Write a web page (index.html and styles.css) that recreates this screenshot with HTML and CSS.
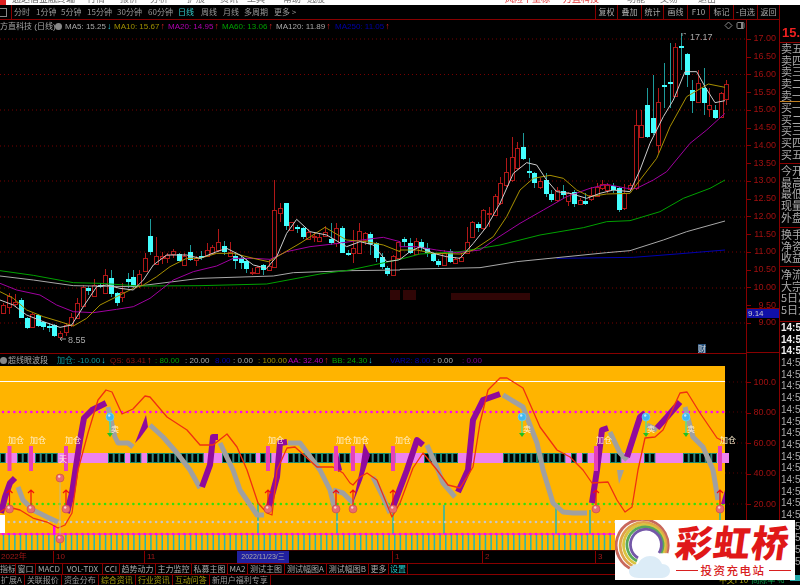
FILE: index.html
```html
<!DOCTYPE html>
<html lang="zh">
<head>
<meta charset="utf-8">
<title>方直科技</title>
<link rel="stylesheet" href="styles.css">
</head>
<body>
<div class="app">
  <header class="menu">
    <i class="logo"></i><span>通达信金融终端</span><span>行情</span><span>报价</span><span>分析</span><span>扩展</span><span>资讯</span><span>工具</span><span>帮助</span><span>选股</span>
    <span class="menu-red">风险不重标 · 万直科技</span><span>功能</span><span>交易</span><span>退出</span>
  </header>

  <nav class="toolbar">
    <div class="periods">
      <i class="square"></i>
      <span class="divider"></span>
      <span class="p w22">分时</span><span class="p w25">1分钟</span><span class="p w26">5分钟</span><span class="p w30">15分钟</span><span class="p w31">30分钟</span><span class="p w30">60分钟</span><span class="p w23 on">日线</span><span class="p w22">周线</span><span class="p w21">月线</span><span class="p w30">多周期</span><span class="p w22">更多 &gt;</span>
    </div>
    <div class="actions">
      <span class="b22">复权</span><span class="b24">叠加</span><span class="b22">统计</span><span class="b24">画线</span><span class="b22">F10</span><span class="b24">标记</span><span class="b24">-自选</span><span class="b22">返回</span>
    </div>
  </nav>

  <section class="main">
    <div class="legend">
      <span class="lg w-name gray">方直科技 (日线)</span><i class="dot"></i>
      <span class="lg w-ma5 gray">MA5: 15.25<b class="dn">↓</b></span>
      <span class="lg w-ma olive">MA10: 15.67<b class="up">↑</b></span>
      <span class="lg w-ma magenta">MA20: 14.95<b class="up">↑</b></span>
      <span class="lg w-ma green">MA60: 13.06<b class="up">↑</b></span>
      <span class="lg w-ma2 gray">MA120: 11.89<b class="up">↑</b></span>
      <span class="lg w-ma2 blue">MA250: 11.05<b class="up">↑</b></span>
      <span class="legend-tools"><svg width="9" height="9" viewBox="0 0 9 9"><path class="tool" d="M4.5 1 8 4.5 4.5 8 1 4.5z"/></svg><svg width="9" height="9" viewBox="0 0 9 9"><rect class="tool" x="1" y="1.5" width="7" height="6" rx="1"/><path class="tool-fill" d="M5 2h2v5H5z"/></svg></span>
    </div>
    <svg id="price" class="plot" width="746" height="320" viewBox="0 33 746 320"></svg>
  </section>
  <div class="axis axis-price">
    <span>17.00</span><span>16.50</span><span>16.00</span><span>15.50</span><span>15.00</span><span>14.50</span><span>14.00</span><span>13.50</span><span>13.00</span><span>12.50</span><span>12.00</span><span>11.50</span><span>11.00</span><span>10.50</span><span>10.00</span><span>9.50</span><span>9.00</span>
    <em class="cursor-price">9.14</em>
  </div>

  <aside class="side">
    <div class="s-price">15.49</div>
    <div class="s-group s-sell"><p>卖五</p><p>卖四</p><p>卖三</p><p>卖二</p><p>卖一</p></div>
    <div class="s-group s-buy"><p>买一</p><p>买二</p><p>买三</p><p>买四</p><p>买五</p></div>
    <div class="s-group s-open"><p>今开</p><p>最高</p><p>最低</p><p>现量</p><p>外盘</p></div>
    <div class="s-group s-turn"><p>换手</p><p>净资</p><p>收益</p></div>
    <div class="s-group s-flow"><p>净流入</p><p>大宗</p><p>5日净流</p><p>5日大单</p></div>
    <div class="s-times">
      <p class="t-hi">14:56</p><p class="t-hi">14:56</p><p class="t-hi">14:56</p><p>14:56</p><p>14:56</p><p>14:56</p><p>14:56</p><p>14:56</p><p>14:56</p><p>14:56</p><p>14:56</p><p>14:56</p><p>14:57</p><p>14:57</p><p>14:57</p><p>14:57</p><p>14:57</p><p>14:57</p><p>14:57</p><p>14:58</p><p>14:58</p>
    </div>
  </aside>

  <section class="indicator">
    <div class="legend legend2">
      <i class="dot dot2"></i>
      <span class="lg2 x49 gray">超线眼波段</span>
      <span class="lg2 x53 teal">加仓: -10.00<b class="dn">↓</b></span>
      <span class="lg2 x45 dred">QS: 63.41<b class="up">↑</b></span>
      <span class="lg2 x30 green">: 80.00</span>
      <span class="lg2 x30 gray">: 20.00</span>
      <span class="lg2 x18 blue">8.00</span>
      <span class="lg2 x25 gray">: 0.00</span>
      <span class="lg2 x30 olive">: 100.00</span>
      <span class="lg2 x44 magenta">AA: 32.40<b class="up">↑</b></span>
      <span class="lg2 x58 green">BB: 24.30<b class="dn">↓</b></span>
      <span class="lg2 x43 blue">VAR2: 8.00</span>
      <span class="lg2 x29 gray">: 0.00</span>
      <span class="lg2 x25 purple">: 0.00</span>
    </div>
    <svg id="osc" class="plot" width="746" height="184" viewBox="0 366 746 184"></svg>
  </section>
  <div class="axis axis-osc">
    <span>100.0</span><span>80.00</span><span>60.00</span><span>40.00</span><span>20.00</span>
  </div>

  <div class="dates">
    <span class="d d0">2022年</span><span class="d d10">10</span><span class="d d11">11</span><span class="d-cur">2022/11/23/三</span><span class="d d1">1</span><span class="d d2">2</span><span class="d d3">3</span>
  </div>
  <div class="dates-axis"></div>

  <div class="tabs">
    <span>指标</span><span>窗口</span><span>MACD</span><span>VOL-TDX</span><span>CCI</span><span>趋势动力</span><span>主力监控</span><span>私募主图</span><span>MA2</span><span>测试主图</span><span>测试幅图A</span><span>测试幅图B</span><span>更多</span><span class="tab-on">设置</span><span></span>
  </div>
  <div class="links">
    <span>扩展A</span><span>关联报价</span><span>资金分布</span><span class="link-y">综合资讯</span><span class="link-y">行业资讯</span><span class="link-y">互动问答</span><span>新用户福利专享</span>
    <span class="status"><b>中文F10</b><b class="st-g">间隙率 %</b><i></i></span>
  </div>
</div>

<div class="watermark">
  <svg class="rainbow" width="62" height="60" viewBox="0 0 62 60">
    <path class="r1" d="M19 50A26 26 0 1 1 52 33"/>
    <path class="r2" d="M20 47A23 23 0 1 1 50 33"/>
    <path class="r3" d="M21 44A20.500 20.500 0 1 1 48 33"/>
    <path class="r4" d="M22 41A18 18 0 1 1 46 33"/>
    <path class="r5" d="M23 38A15.500 15.500 0 1 1 44 33"/>
    <path class="cloud" d="M24 58c-7 0-10-3-10-7s4-7 9-7c2-5 7-8 12-8 6 0 10 3 12 8 5 0 8 3 8 7s-4 7-8 7z"/>
  </svg>
  <div class="brand">
    <div class="brand-name">彩虹桥</div>
    <div class="brand-sub"><i></i><span>投资充电站</span><i></i></div>
  </div>
</div>
<script src="app.js"></script>
</body>
</html>
```
FILE: styles.css
```css
* { box-sizing: border-box; }
html, body { margin: 0; padding: 0; background: #000; }
body { position: relative; width: 800px; height: 585px; overflow: hidden; font-family: "Liberation Sans", "Noto Sans CJK SC", sans-serif; }
p { margin: 0; }

.app {
  width: 800px; height: 585px; overflow: hidden; background: #000; color: #aaa;
  display: grid;
  grid-template-columns: 746px 34px 20px;
  grid-template-rows: 5px 15px 333px 197px 14px 11px 10px;
  filter: blur(0.45px);
}

/* top menu, clipped by the window edge */
.menu { grid-column: 1 / -1; background: #fff; overflow: hidden; display: grid; grid-template-columns: 12px 75px 33px 30px 37px 33px 27px 36px 24px 198px 122px 33px 38px 42px; font: 9px/10px "Noto Sans CJK SC", sans-serif; color: #777; white-space: nowrap; }
.menu span { margin-top: -6px; height: 11px; overflow: hidden; }
.logo { width: 6px; height: 5px; background: #d22; }
.menu span:first-of-type { color: #555; }
.menu .menu-red { color: #e03030; }

/* toolbar */
.toolbar { grid-column: 1 / -1; display: flex; justify-content: space-between; height: 15px; width: 780px; border-bottom: 1px solid #800; border-right: 1px solid #800; font: 8px/14px "Noto Sans CJK SC", sans-serif; color: #999; }
.periods { display: flex; align-items: center; }
.square { width: 7px; height: 9px; border: 1px solid #888; border-left: 0; margin-right: 4px; }
.divider { width: 1px; height: 14px; background: #800; margin-right: 2px; }
.p { display: block; flex: none; white-space: nowrap; }
.w21 { width: 21px; } .w22 { width: 22px; } .w23 { width: 23px; } .w25 { width: 25px; } .w26 { width: 26px; } .w30 { width: 30px; } .w31 { width: 31px; }
.on { color: #3cc; }
.actions { display: flex; }
.actions span { display: block; border-left: 1px solid #800; text-align: center; white-space: nowrap; color: #aaa; }
.b22 { width: 22px; } .b24 { width: 24px; }

/* plots */
.main { grid-column: 1; grid-row: 3; }
.indicator { grid-column: 1; grid-row: 4; border-top: 1px solid #800; }
.plot { display: block; }
.legend { display: flex; align-items: center; height: 13px; font: 8px/13px "Liberation Sans", "Noto Sans CJK SC", sans-serif; white-space: nowrap; position: relative; }
.legend b { font-weight: 700; font-size: 9px; margin-left: 1px; }
.lg { display: block; flex: none; }
.w-name { width: 55px; }
.w-ma5 { width: 49px; }
.w-ma { width: 54px; }
.w-ma2 { width: 59px; }
.dot { width: 7px; height: 7px; border-radius: 50%; background: #888; margin-right: 3px; flex: none; }
.dot2 { margin: 0 1px 0 0; }
.legend-tools { position: absolute; left: 724px; top: 1px; display: flex; gap: 3px; }
.tool { fill: none; stroke: #888; }
.tool-fill { fill: #888; }
.legend2 { height: 12px; }
.lg2 { display: block; flex: none; }
.x18 { width: 18px; } .x25 { width: 25px; } .x29 { width: 29px; } .x30 { width: 30px; } .x43 { width: 43px; } .x44 { width: 44px; } .x45 { width: 45px; } .x49 { width: 49px; } .x53 { width: 53px; } .x58 { width: 58px; }
.gray { color: #a8a8a8; } .olive { color: #a09000; } .magenta { color: #b000b0; } .green { color: #00a000; } .blue { color: #0000a8; } .teal { color: #109898; } .dred { color: #901010; } .purple { color: #800090; }
.up { color: #d02020; } .dn { color: #20c8d8; }

/* axes */
.axis { border-left: 1px solid #800; border-right: 1px solid #800; color: #a01010; font: 9px/1 "Liberation Sans", sans-serif; position: relative; display: flex; flex-direction: column; }
.axis span { display: flex; align-items: center; justify-content: flex-end; padding-right: 3px; flex: none; position: relative; }
.axis span::before { content: ""; position: absolute; left: 0; top: 50%; width: 4px; height: 1px; background: #800; }
.axis-price { grid-column: 2; grid-row: 3; padding-top: 10px; border-bottom: 1px solid #800; }
.axis-price span { height: 17.75px; }
.axis-osc { grid-column: 2; grid-row: 4; padding-top: 14px; }
.axis-osc span { height: 30.55px; }
.cursor-price { position: absolute; left: 0; top: 288px; width: 32px; height: 10px; background: #1010a8; border-top: 1px solid #800; color: #ccc; font: 8px/9px "Liberation Sans", sans-serif; padding-left: 1px; }

/* side panel */
.side { grid-column: 3; grid-row: 3 / -1; overflow: hidden; color: #aaa; font: 11px/11.700px "Noto Sans CJK SC", "Liberation Sans", sans-serif; white-space: nowrap; }
.s-price { height: 23px; font: 700 13px/25px "Liberation Sans", sans-serif; color: #f02020; padding-left: 2px; border-bottom: 1px solid #800; }
.s-group { border-bottom: 1px solid #800; padding-left: 1px; }
.s-group p { height: 11.7px; }
.s-sell { height: 59px; border-bottom-color: #c08020; }
.s-buy { height: 62px; }
.s-open { height: 64px; padding-top: 1px; }
.s-turn { height: 39px; padding-top: 1px; }
.s-flow { height: 55px; padding-top: 2px; }
.s-times { font-family: "Liberation Sans", sans-serif; padding-left: 1px; color: #aaa; }
.s-times p { height: 11.7px; font-size: 10px; }
.t-hi { color: #eee; font-weight: 700; }

/* dates */
.dates { grid-column: 1; grid-row: 5; position: relative; border-top: 1px solid #300; border-bottom: 1px solid #800; font: 8px/12px "Liberation Sans", "Noto Sans CJK SC", sans-serif; color: #a01818; }
.d { position: absolute; top: 0; padding-left: 2px; border-left: 1px solid #800; height: 12px; }
.d0 { left: -1px; border-left: 0; }
.d10 { left: 53px; } .d11 { left: 144px; } .d1 { left: 392px; } .d2 { left: 482px; } .d3 { left: 595px; }
.d-cur { position: absolute; left: 237px; top: 0; width: 52px; height: 12px; background: #2020a0; color: #aaa; font-size: 7px; white-space: nowrap; text-align: center; }
.dates-axis { grid-column: 2 / 3; grid-row: 5; border-left: 1px solid #800; border-right: 1px solid #800; border-bottom: 1px solid #800; }

/* tabs */
.tabs { grid-column: 1 / 3; grid-row: 6; display: grid; grid-template-columns: 16px 20px 27px 40px 17px 36px 36px 36px 20px 37px 42px 42px 20px 19px 1fr; border-bottom: 1px solid #800; font: 8px/10px "Noto Sans CJK SC", "Liberation Sans", sans-serif; color: #aaa; white-space: nowrap; }
.tabs span { border-right: 1px solid #800; text-align: center; overflow: hidden; }
.tabs .tab-on { color: #2cc; }
.links { grid-column: 1 / -1; grid-row: 7; display: flex; font: 8px/10px "Noto Sans CJK SC", "Liberation Sans", sans-serif; color: #999; white-space: nowrap; }
.links span { display: block; padding: 0 2px 0 1px; border-right: 1px solid #800; }
.links span:nth-of-type(n+2) { padding: 0 2px 0 2px; }
.links .link-y { color: #a8a010; }
.links .status { margin-left: 446px; border: 0; display: flex; gap: 3px; padding: 4px 0 0; }
.status b { font-weight: 400; color: #a8a010; }
.status .st-g { color: #10a050; }
.status i { width: 10px; height: 6px; background: #2aa; margin-left: 3px; }

/* svg parts */
.grid-line { stroke: #700; stroke-width: 1; stroke-dasharray: 1 3; }
.c-up { fill: #000; stroke: #b01818; stroke-width: 1; }
.c-up-w { stroke: #b01818; stroke-width: 1; }
.c-dn { fill: #4ff; }
.c-dn-w { stroke: #1e9a9a; stroke-width: 1; }
.ma { fill: none; stroke-width: 1; stroke-linejoin: round; }
.m5 { stroke: #ccc; } .m10 { stroke: #a89000; } .m20 { stroke: #a000a0; } .m60 { stroke: #00a000; } .m120 { stroke: #a8a8a8; } .m250 { stroke: #0000b0; }
.peak { fill: #aaa; font: 9px "Liberation Sans", sans-serif; }
.peak-l { fill: none; stroke: #999; }
.smear { fill: #300606; }
.fin-bg { fill: #26507a; }
.fin { fill: #ddd; font: 8px "Noto Sans CJK SC", sans-serif; }
.o-bg { fill: #ffb400; }
.o-white { stroke: #fff; stroke-width: 1; }
.o-dots { stroke-width: 2.600; stroke-linecap: round; stroke-dasharray: 0 5.67; }
.od-m { stroke: #f0f; } .od-g { stroke: #30e010; } .od-s { stroke: #c8c8c8; }
.o-m-line { stroke: #f0f; stroke-width: 1; }
.o-tick { stroke: #20b8b0; stroke-width: 1.500; }
.o-band-p { fill: none; stroke: #900a9c; stroke-width: 6; stroke-linejoin: round; }
.o-band-g { fill: none; stroke: #a0a0a0; stroke-width: 5; stroke-linejoin: round; }
.o-tri-p { fill: #900a9c; }
.o-tri-g { fill: #a0a0a0; }
.o-red { fill: none; stroke: #f03010; stroke-width: 1.300; stroke-linejoin: round; }
.band-bg { fill: #ee82ee; }
.band-cell { fill: #000; stroke: #148a70; stroke-width: 1; }
.band-tall { fill: #e840b8; }
.o-label { fill: #fff0d0; font: 8px "Noto Sans CJK SC", sans-serif; }
.ball { fill: #e86a70; stroke: #c04040; stroke-width: .5; }
.ball-hi { fill: #fff; opacity: .7; }
.ball-b { fill: #40b8f0; stroke: #70e0ff; stroke-width: .5; }
.arrow-r { stroke: #f01010; stroke-width: 1.200; fill: none; }
.arrow-g { stroke: #30e8b0; stroke-width: 1.200; fill: none; }
.arrow-gh { fill: #20c020; }
.o-gline { stroke: #c0b890; stroke-width: 1; }
.o-white-block { fill: #fff; }
.o-mag-block { fill: #f0f; }
.o-end { stroke: #500; stroke-dasharray: 1 3; }

/* watermark */
.watermark { position: absolute; left: 615px; top: 520px; width: 180px; height: 60px; background: #fff; display: flex; overflow: hidden; }
.rainbow { flex: none; }
.rainbow path { fill: none; stroke-width: 2.800; }
.rainbow .r1 { stroke: #c8685c; } .rainbow .r2 { stroke: #e0a24a; } .rainbow .r3 { stroke: #d8c440; } .rainbow .r4 { stroke: #5aa858; } .rainbow .r5 { stroke: #7458a8; }
.rainbow .cloud { fill: #dcecf7; stroke: none; }
.brand { flex: 1; display: flex; flex-direction: column; align-items: center; }
.brand-name { font: 900 37px/42px "Noto Sans CJK SC", sans-serif; color: #e01818; letter-spacing: 1px; transform: skewX(-8deg); margin-left: -6px; }
.brand-sub { display: flex; align-items: center; gap: 3px; font: 500 11.500px/16px "Noto Sans CJK SC", sans-serif; color: #d82020; letter-spacing: 1.500px; margin-left: -6px; }
.brand-sub i { width: 22px; height: 1px; background: #d82020; }
```
FILE: app.js
```js
const NS = 'http://www.w3.org/2000/svg';
function el(parent, name, attrs, text) {
  const n = document.createElementNS(NS, name);
  for (const k in attrs) n.setAttribute(k, attrs[k]);
  if (text) n.textContent = text;
  parent.appendChild(n);
  return n;
}
const pts = a => a.map(p => p.join(',')).join(' ');

/* ---------- price chart ---------- */
const price = document.getElementById('price');
[39, 74.5, 110, 146, 181, 217, 252, 288, 323].forEach(y =>
  el(price, 'line', { x1: 0, x2: 746, y1: y, y2: y, class: 'grid-line' }));
[[390, 290, 10, 10], [403, 290, 13, 10], [451, 293, 79, 7]].forEach(r =>
  el(price, 'rect', { x: r[0], y: r[1], width: r[2], height: r[3], class: 'smear' }));

/* candles in 3x crop units: x, up?, body top, body bottom, wick top, wick bottom */
const left = [[10,1,345,368,340,370],[27,1,318,350,310,372],[44,1,335,342,312,350],[62,0,330,383,325,385],[80,0,385,414,380,416],[96,1,372,412,370,414],[113,0,375,408,372,410],[130,0,396,412,392,420],[147,0,408,412,400,425],[163,0,405,437,402,440],[180,1,428,440,424,446],[198,1,405,425,400,438],[214,1,380,405,370,410],[232,1,340,383,325,385],[248,1,292,348,285,350],[265,0,295,303,288,315],[282,1,285,318,268,320],[300,0,285,290,278,295],[316,1,256,310,236,312],[333,0,264,312,240,320],[350,0,310,340,305,348],[367,1,305,322,280,335],[384,0,268,276,250,295],[400,0,262,290,240,295],[418,1,252,285,240,295],[435,1,205,243,190,247],[451,0,138,185,87,195],[468,1,198,222,140,224],[485,1,198,205,185,222],[502,1,196,205,188,218],[518,1,182,192,178,205],[536,0,193,212,190,214],[553,1,198,225,190,226],[570,0,185,210,165,212],[587,1,205,210,198,228],[604,0,198,205,182,210],[620,1,180,198,158,202],[637,1,170,190,165,195],[655,1,155,180,118,185],[672,0,168,186,152,195],[689,1,185,198,155,200],[706,0,198,214,185,238],[722,0,203,218,195,236],[739,0,212,238,208,248],[755,1,245,250,235,255],[772,1,232,248,228,252],[790,0,226,240,222,256],[806,1,228,240,210,242],[823,1,60,230,-30,232],[840,1,55,68,38,95],[857,0,40,108,40,120],[874,1,97,120,95,122],[891,0,110,118,104,130],[908,0,115,142,110,148],[925,1,125,148,118,150],[942,1,138,142,125,155],[958,1,140,152,130,155],[975,1,125,138,108,140],[992,0,148,160,100,165],[1009,1,115,160,100,170],[1026,0,115,188,108,190],[1043,0,188,195,180,198],[1060,1,175,188,120,220],[1076,1,122,188,98,190],[1094,1,130,150,125,165],[1110,0,132,162,125,195],[1128,0,160,205,155,215],[1145,0,200,232,190,238],[1162,0,233,252,228,258],[1180,1,198,256,195,258],[1195,1,155,205,155,205]];
const right = [[13,0,627,637,620,650],[30,0,640,668,625,672],[47,1,632,672,625,675],[64,0,635,655,628,662],[81,0,653,670,640,682],[98,0,672,692,665,695],[115,0,692,704,688,710],[132,1,670,705,660,708],[149,0,662,696,658,700],[166,1,688,698,680,700],[183,1,680,692,672,695],[200,1,635,670,592,672],[217,1,575,620,572,622],[233,0,582,595,575,605],[250,1,540,595,537,600],[267,1,548,552,530,590],[284,1,498,555,492,558],[301,1,460,520,440,525],[318,1,425,465,385,470],[335,1,382,450,320,455],[352,1,355,415,335,420],[369,0,352,388,310,390],[386,0,423,430,385,445],[403,0,428,460,425,475],[420,1,452,470,445,478],[437,0,450,493,430,500],[454,0,493,510,480,515],[471,1,480,510,470,515],[488,0,482,495,465,505],[505,1,488,512,485,528],[522,0,485,522,480,530],[539,1,510,522,505,525],[556,0,514,522,490,525],[573,1,495,508,470,512],[590,1,470,497,460,500],[605,1,462,475,450,480],[622,1,465,480,458,490],[639,0,468,480,460,490],[656,0,475,540,470,545],[673,1,490,535,462,540],[690,1,465,478,458,482],[707,1,285,475,240,480],[724,1,285,320,240,325],[741,0,225,320,175,325],[758,0,265,310,135,315],[775,1,215,345,175,370],[792,0,166,172,100,235],[809,0,155,163,40,235],[826,1,52,198,40,200],[843,0,48,55,5,120],[860,0,72,135,70,170],[877,0,180,212,150,250],[894,1,160,215,120,220],[911,0,175,220,115,255],[928,1,225,238,175,260],[945,0,240,265,225,268],[962,1,190,262,185,265],[978,1,162,208,150,225]];

function candle(c, ox, oy) {
  const x = Math.round(ox + c[0] / 3) + 0.5, y = v => Math.round(oy + v / 3);
  const top = y(c[2]), bot = y(c[3]);
  el(price, 'line', { x1: x, x2: x, y1: y(c[4]), y2: y(c[5]), class: c[1] ? 'c-up-w' : 'c-dn-w' });
  if (c[1]) el(price, 'rect', { x: x - 2, y: top + 0.5, width: 4, height: Math.max(bot - top, 1), class: 'c-up' });
  else el(price, 'rect', { x: x - 2.5, y: top, width: 5, height: Math.max(bot - top, 2), class: 'c-dn' });
}
left.forEach(c => candle(c, 0, 190));
right.forEach(c => candle(c, 400, 30));

const L = a => a.map(p => [p[0] / 3, 190 + p[1] / 3]);
const R = a => a.map(p => [400 + p[0] / 3, 30 + p[1] / 3]);
const mas = {
  m250: R([[470,685],[700,682],[830,672],[975,660]]),
  m120: [...L([[0,258],[100,270],[220,287],[400,290],[600,265],[820,258],[880,248],[1050,242],[1200,240]]), ...R([[0,718],[240,713],[350,695],[480,682],[620,668],[690,662],[790,630],[860,605],[975,573]])],
  m60: [...L([[0,242],[100,256],[220,278],[300,280],[420,288],[600,287],[800,282],[960,252],[1050,240],[1120,225],[1200,208]]), ...R([[0,688],[60,672],[180,665],[300,645],[420,615],[550,593],[620,575],[690,572],[780,545],[850,505],[930,475],[975,450]])],
  m20: [...L([[0,280],[50,300],[120,315],[170,345],[220,365],[280,368],[350,358],[400,350],[450,325],[520,270],[580,245],[650,228],[700,205],[760,205],[810,208],[860,185],[930,170],[1000,162],[1100,148],[1150,142],[1200,155]]), ...R([[0,650],[50,650],[110,660],[170,668],[240,660],[290,625],[360,580],[430,540],[500,500],[570,475],[620,463],[680,475],[710,475],[760,450],[800,425],[870,340],[920,300],[975,250]])],
  m10: [...L([[0,305],[40,325],[80,360],[130,380],[180,395],[220,408],[260,385],[300,345],[350,320],[400,295],[430,285],[470,260],[510,230],[560,205],[600,205],[650,190],[700,190],[760,205],[805,215],[840,195],[900,160],[975,112],[1040,150],[1100,155],[1150,165],[1200,185]]), ...R([[0,660],[50,660],[100,670],[180,672],[220,660],[280,620],[320,560],[360,480],[400,445],[450,436],[490,445],[530,480],[570,500],[620,492],[690,490],[720,450],[770,385],[810,290],[860,200],[925,162],[975,172]])],
  m5: [...L([[0,330],[40,345],[80,375],[130,395],[180,412],[215,405],[250,350],[290,290],[320,285],[360,295],[400,300],[430,270],[460,225],[500,195],[560,195],[600,205],[650,185],[680,175],[720,195],[760,225],[800,235],[830,200],[860,130],[890,88],[930,125],[980,135],[1040,170],[1080,155],[1120,165],[1160,215],[1195,210]]), ...R([[0,688],[30,665],[60,650],[100,670],[140,680],[180,685],[220,640],[260,590],[300,520],[340,430],[380,398],[410,405],[440,450],[470,485],[510,490],[560,505],[600,490],[640,480],[690,485],[720,420],[750,340],[790,260],[820,210],[855,125],[890,125],[915,170],[945,218],[975,212]])]
};
for (const k in mas) el(price, 'polyline', { points: pts(mas[k]), class: 'ma ' + k });

el(price, 'path', { d: 'M682 36v-4l4 2', class: 'peak-l' });
el(price, 'text', { x: 690, y: 40, class: 'peak' }, '17.17');
el(price, 'path', { d: 'M60 339h6M60 339l2-2M60 339l2 2', class: 'peak-l' });
el(price, 'text', { x: 68, y: 343, class: 'peak' }, '8.55');
el(price, 'rect', { x: 698, y: 344, width: 8, height: 9, class: 'fin-bg' });
el(price, 'text', { x: 698, y: 352, class: 'fin' }, '财');

/* ---------- oscillator ---------- */
const osc = document.getElementById('osc');
el(osc, 'rect', { x: 0, y: 366, width: 725, height: 184, class: 'o-bg' });
[382, 412, 443, 473, 504].forEach(y => el(osc, 'line', { x1: 725, x2: 746, y1: y, y2: y, class: 'o-end' }));
el(osc, 'line', { x1: 0, x2: 725, y1: 381.5, y2: 381.5, class: 'o-white' });

const step = 5.67;
for (let i = 0; i < 127; i++) {
  const x = 3.5 + i * step;
  el(osc, 'line', { x1: x, x2: x, y1: 534, y2: 550, class: 'o-tick' });
}
[[258, 505], [337, 510], [393, 510], [444, 505], [556, 505], [590, 510], [720, 512]].forEach(t =>
  el(osc, 'line', { x1: t[0], x2: t[0], y1: t[1], y2: 534, class: 'o-tick' }));
el(osc, 'line', { x1: 0, x2: 725, y1: 534, y2: 534, class: 'o-m-line' });
[[534, 'od-m'], [522, 'od-s'], [504, 'od-g'], [412, 'od-m']].forEach(d =>
  el(osc, 'line', { x1: 3, x2: 727, y1: d[0], y2: d[0], class: 'o-dots ' + d[1] }));
el(osc, 'rect', { x: 0, y: 515, width: 5, height: 18, class: 'o-white-block' });
el(osc, 'rect', { x: 53, y: 525, width: 2.5, height: 9, class: 'o-mag-block' });

/* pink / black band */
el(osc, 'rect', { x: 0, y: 453, width: 729, height: 10, class: 'band-bg' });
[[0,2],[17,29],[35,57],[108,125],[130,137],[147,204],[222,254],[260,267],[288,333],[339,351],[367,391],[424,458],[503,565],[571,577],[582,588],[610,622],[644,656],[683,718]].forEach(r => {
  for (let x = r[0]; x < r[1] - 1; x += step)
    el(osc, 'rect', { x: x + 0.5, y: 453.5, width: step - 1, height: 9, class: 'band-cell' });
});

const pr = [
  [[1,513],[5,497],[10,483],[15,478]],
  [[67,513],[72,493],[80,440],[84,418],[92,410],[106,403]],
  [[202,487],[210,465],[213,437],[218,437]],
  [[268,510],[277,477],[280,443],[287,442]],
  [[393,507],[407,470],[417,440],[423,445]],
  [[458,492],[468,470],[473,420],[483,400],[500,394]],
  [[592,503],[597,470],[602,430],[608,428]],
  [[627,457],[640,417],[645,413]],
  [[657,428],[667,417],[680,402]]
];
const gr = [
  [[18,487],[23,500],[33,510],[47,517],[58,522]],
  [[108,407],[115,437],[118,443],[128,443],[133,447]],
  [[150,425],[163,437],[177,453],[190,470],[200,488]],
  [[220,443],[233,470],[240,490],[257,515],[264,515]],
  [[288,443],[300,443],[320,470],[330,490],[335,510]],
  [[333,490],[343,493],[353,503]],
  [[373,477],[383,497],[390,513]],
  [[427,445],[438,470],[443,483],[455,497]],
  [[503,395],[523,407],[537,443],[543,470],[553,503],[563,512],[573,513],[587,513]],
  [[610,432],[620,453],[627,460]],
  [[647,425],[657,430]],
  [[685,407],[693,437],[703,447],[713,470],[718,500]]
];
gr.forEach(p => el(osc, 'polyline', { points: pts(p), class: 'o-band-g' }));
pr.forEach(p => el(osc, 'polyline', { points: pts(p), class: 'o-band-p' }));
el(osc, 'polygon', { points: '135,443 146,415 148,427 140,438', class: 'o-tri-p' });
el(osc, 'polygon', { points: '336,445 338,472 342,470', class: 'o-tri-p' });
el(osc, 'polygon', { points: '353,503 360,470 364,443 370,455 362,480', class: 'o-tri-p' });
el(osc, 'polygon', { points: '721,504 725,490 725,504', class: 'o-tri-p' });
el(osc, 'polygon', { points: '617,470 619,484 624,470', class: 'o-tri-g' });

el(osc, 'polyline', { class: 'o-red', points: pts([[0,512],[8,507],[20,510],[33,518],[47,522],[58,528],[65,525],[72,513],[78,470],[88,433],[98,400],[106,390],[112,392],[122,414],[133,409],[145,396],[150,397],[167,417],[187,430],[200,445],[213,445],[227,434],[237,447],[247,470],[258,503],[267,513],[272,515],[277,470],[287,448],[295,447],[317,467],[333,467],[343,473],[350,483],[353,485],[360,477],[367,473],[377,480],[392,517],[400,503],[413,468],[423,453],[437,470],[448,485],[460,488],[467,477],[473,467],[480,423],[488,390],[500,378],[507,378],[523,388],[540,427],[557,450],[570,457],[583,470],[592,483],[608,482],[617,500],[625,512],[632,507],[638,470],[645,438],[655,437],[663,430],[680,393],[687,392],[700,413],[717,438],[725,442]]) });

[9.5, 31, 66, 268, 336, 353, 393, 596, 720].forEach(x => {
  el(osc, 'rect', { x: x - 2, y: 446, width: 4, height: 25, class: 'band-tall' });
});
[[16,'加仓'],[38,'加仓'],[73,'加仓'],[276,'加仓'],[344,'加仓'],[361,'加仓'],[403,'加仓'],[604,'加仓'],[728,'加仓']].forEach(l =>
  el(osc, 'text', { x: l[0] - 8, y: 443, class: 'o-label' }, l[1]));
el(osc, 'text', { x: 59, y: 462, class: 'o-label' }, '天');

function ball(x, y, cls) {
  el(osc, 'circle', { cx: x, cy: y, r: 4, class: cls });
  el(osc, 'circle', { cx: x - 0.8, cy: y - 1.5, r: 1.2, class: 'ball-hi' });
}
el(osc, 'line', { x1: 60, x2: 60, y1: 478, y2: 539, class: 'o-gline' });
[9.5, 31, 66, 268, 336, 353, 393, 596, 720].forEach(x => {
  el(osc, 'path', { d: `M${x} 505V490M${x - 3} 493l3-3 3 3`, class: 'arrow-r' });
  ball(x, 509, 'ball');
});
ball(60, 478, 'ball');
ball(60, 539, 'ball');
[110, 522, 646, 686].forEach(x => {
  el(osc, 'line', { x1: x, x2: x, y1: 420, y2: 434, class: 'arrow-g' });
  el(osc, 'path', { d: `M${x - 3} 433h6l-3 4z`, class: 'arrow-gh' });
  ball(x, 417, 'ball-b');
  el(osc, 'text', { x: x + 1, y: 432, class: 'o-label' }, '卖');
});
```
